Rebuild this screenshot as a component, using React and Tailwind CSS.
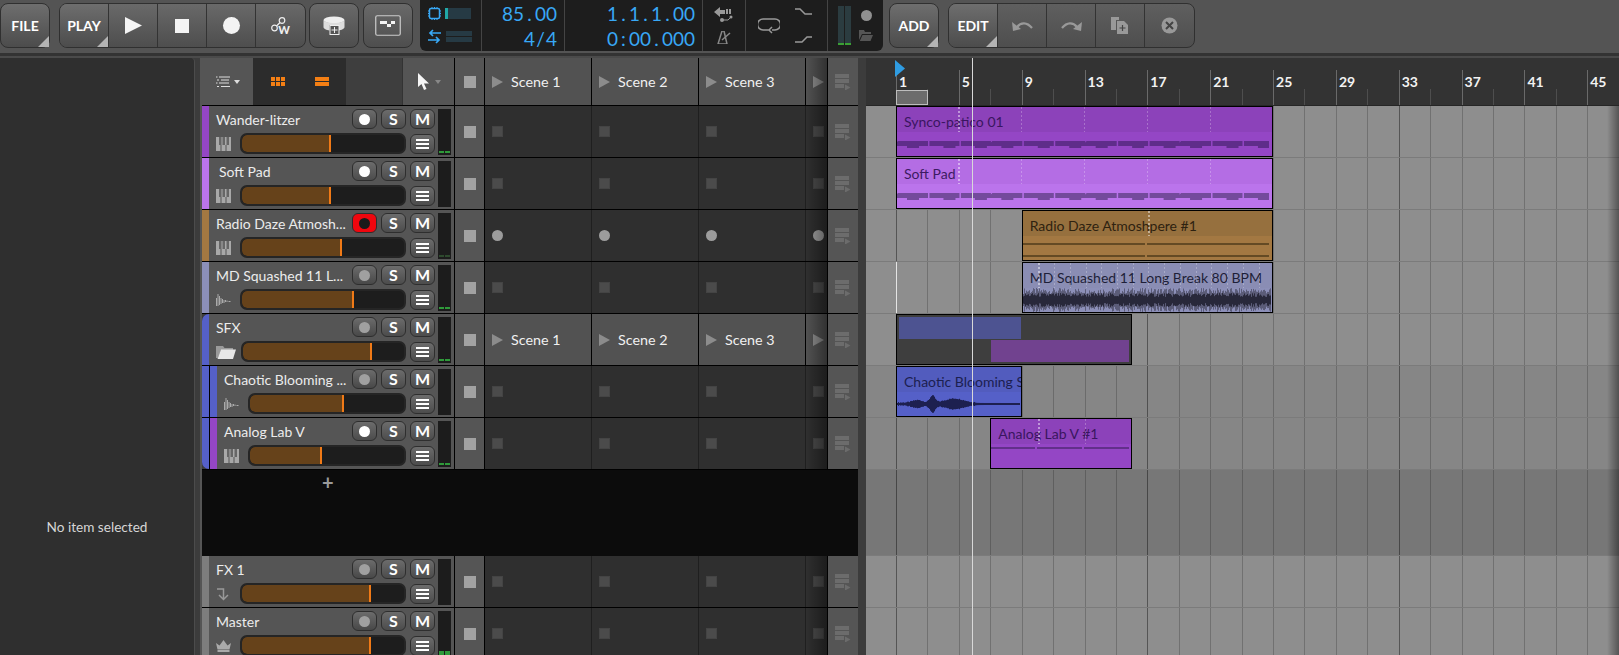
import React from "react"

const BAR = 15.71
const ORIGIN = 30 // bar 1 inside the arrange panel

const barX = (bar) => ORIGIN + (bar - 1) * BAR

const tracks = [
  { name: "Wander-litzer", color: "#9446c5", rec: "on", icon: "piano", fill: 90, meter: 1 },
  { name: "Soft Pad", color: "#bb74ec", rec: "on", icon: "piano", fill: 90, meter: 0, indent: true },
  { name: "Radio Daze Atmosh...", color: "#a37842", rec: "armed", icon: "piano", fill: 101, meter: 0.3, dots: true },
  { name: "MD Squashed 11 L...", color: "#8c8fb8", rec: "off", icon: "wave", fill: 113, meter: 1 },
  { name: "SFX", color: "#5560c8", rec: "off", icon: "folder", fill: 130, meter: 1, group: true },
  { name: "Chaotic Blooming ...", color: "#5560c8", rec: "off", icon: "wave", fill: 95, meter: 0, nested: true },
  { name: "Analog Lab V", color: "#9446c5", rec: "on", icon: "piano", fill: 73, meter: 1, nested: true, last: true },
]

const returns = [
  { name: "FX 1", color: "#7d7d7d", rec: "off", icon: "return", fill: 130, meter: 0 },
  { name: "Master", color: "#7d7d7d", rec: "off", icon: "crown", fill: 130, meter: 2 },
]

function Corner() {
  return <span className="absolute right-0 bottom-0 w-[11px] h-[11px] bg-[#b4b4b4] [clip-path:polygon(100%_0,100%_100%,0_100%)]" />
}

function ToolBtn({ label }) {
  return (
    <div className="relative w-[50px] h-[45px] flex items-center justify-center rounded-[8px] border border-[#303030] bg-linear-to-b from-[#6e6e6e] to-[#4c4c4c] text-[14px] font-bold text-white">
      {label}
      <Corner />
    </div>
  )
}

function GroupBtn({ first, last, children }) {
  return (
    <div className={`relative w-[49px] h-full flex items-center justify-center border-r border-[#333] ${first ? "bg-linear-to-b from-[#6e6e6e] to-[#4c4c4c] text-white font-bold text-[14px]" : ""} ${last ? "border-r-0" : ""}`}>
      {children}
    </div>
  )
}

function Toolbar() {
  return (
    <div className="h-[53px] shrink-0 flex items-start pt-[3px] bg-[#545454]">
      <ToolBtn label="FILE" />
      <div className="ml-[9px] h-[45px] flex rounded-[8px] border border-[#303030] overflow-hidden bg-linear-to-b from-[#696969] to-[#4e4e4e]">
        <GroupBtn first>PLAY<Corner /></GroupBtn>
        <GroupBtn><svg width="17" height="17" viewBox="0 0 17 17"><path d="M0 0L17 8.5L0 17Z" fill="#f4f4f4" /></svg></GroupBtn>
        <GroupBtn><span className="w-[14px] h-[14px] bg-[#f4f4f4]" /></GroupBtn>
        <GroupBtn><span className="w-[17px] h-[17px] rounded-full bg-[#f4f4f4]" /></GroupBtn>
        <GroupBtn last>
          <svg width="18" height="16" viewBox="0 0 18 16" className="mb-[2px] -mr-[4px]"><g fill="none" stroke="#eee" strokeWidth="1.2"><circle cx="3.5" cy="11" r="2.8" /><circle cx="11" cy="3.5" r="2.8" /><path d="M5.5 9L9 5.5" /></g></svg>
          <span className="text-[11px] font-black text-[#eee] mt-[10px] -ml-[7px]">W</span>
        </GroupBtn>
      </div>
      <div className="ml-[3px] w-[50px] h-[45px] flex items-center justify-center rounded-[8px] border border-[#303030] bg-linear-to-b from-[#696969] to-[#4e4e4e]">
        <svg width="22" height="19" viewBox="0 0 22 19"><ellipse cx="11" cy="4" rx="10.5" ry="3.5" fill="#eee" /><path d="M.5 4v7c0 2 3 3 6 3.5V9h9v5.5c3-.5 6-1.500 6-3.500V4c-1 2-5 3-10.500 3S1.500 6 .5 4Z" fill="#ddd" /><rect x="7" y="9.500" width="9" height="9" fill="#555" stroke="#eee" /><path d="M11.500 11v6M8.500 14h6" stroke="#eee" /></svg>
      </div>
      <div className="ml-[4px] w-[50px] h-[45px] flex items-center justify-center rounded-[8px] border border-[#303030] bg-linear-to-b from-[#696969] to-[#4e4e4e]">
        <svg width="26" height="21" viewBox="0 0 26 21"><rect x=".75" y=".75" width="24.500" height="19.500" rx="1.500" fill="none" stroke="#ccc" strokeWidth="1.200" /><rect x="5" y="6" width="7" height="3" fill="#f4f4f4" /><rect x="12" y="9" width="4" height="3" fill="#f4f4f4" /><rect x="16" y="6" width="4" height="3" fill="#f4f4f4" /></svg>
      </div>
      <Display />
      <div className="ml-[6px]"><ToolBtn label="ADD" /></div>
      <div className="ml-[9px] h-[45px] flex rounded-[8px] border border-[#303030] overflow-hidden bg-linear-to-b from-[#5f5f5f] to-[#4e4e4e]">
        <GroupBtn first>EDIT<Corner /></GroupBtn>
        <GroupBtn>
          <svg width="21" height="12" viewBox="0 0 21 12"><path d="M5 7C9 2 15 2 20 8" fill="none" stroke="#999" strokeWidth="2.200" /><path d="M0 2l1 9 8-2Z" fill="#999" /></svg>
        </GroupBtn>
        <GroupBtn>
          <svg width="21" height="12" viewBox="0 0 21 12"><path d="M16 7C12 2 6 2 1 8" fill="none" stroke="#999" strokeWidth="2.200" /><path d="M21 2l-1 9-8-2Z" fill="#999" /></svg>
        </GroupBtn>
        <GroupBtn>
          <svg width="18" height="17" viewBox="0 0 18 17"><path d="M0 0h8v3H5v10H0Z" fill="#999" /><path d="M6 4h7l4 4v9H6Z" fill="#999" /><path d="M11.500 8v6M8.500 11h6" stroke="#444" strokeWidth="1.200" /></svg>
        </GroupBtn>
        <GroupBtn last>
          <svg width="17" height="17" viewBox="0 0 17 17"><circle cx="8.500" cy="8.500" r="8" fill="#999" /><path d="M5 5l7 7M12 5l-7 7" stroke="#444" strokeWidth="2" /></svg>
        </GroupBtn>
      </div>
    </div>
  )
}

// the transport readout has fixed width digits
function Digits({ text }) {
  return (
    <div className="flex justify-end h-[25px]">
      {text.split("").map((c, i) => (
        <span key={i} className="w-[11px] text-center">{c}</span>
      ))}
    </div>
  )
}

function Display() {
  const blue = "text-[#38a8f5] text-[19px] leading-[25px]"
  return (
    <div className="ml-[7px] -mt-[3px] w-[463px] h-[51px] flex bg-[#1d1d1d] rounded-b-[6px] divide-x divide-[#444]">
      <div className="w-[62px] flex flex-col justify-between py-[7px] pl-[8px]">
        <div className="flex items-center gap-[4px]">
          <svg width="13" height="13" viewBox="0 0 13 13"><rect x="1.500" y="1.500" width="10" height="10" rx="1.500" fill="none" stroke="#38a8f5" strokeWidth="1.500" /><path d="M4 0v1.500M6.500 0v1.500M9 0v1.500M4 11.500V13M6.500 11.500V13M9 11.500V13M0 4h1.500M0 6.500h1.500M0 9h1.500M11.500 4H13M11.500 6.500H13M11.500 9H13" stroke="#38a8f5" /></svg>
          <div className="w-[26px] h-[11px] bg-[#263a44]"><div className="w-[3px] h-full bg-[#20a8a8]" /></div>
        </div>
        <div className="flex items-center gap-[5px]">
          <svg width="13" height="15" viewBox="0 0 13 15"><path d="M13 4H2M5 1L2 4l3 3M0 11h11M8 8l3 3-3 3" fill="none" stroke="#38a8f5" strokeWidth="1.700" /></svg>
          <div className="w-[26px] flex flex-col gap-[1px]"><div className="h-[5px] bg-[#263a44]" /><div className="h-[5px] bg-[#263a44]" /></div>
        </div>
      </div>
      <div className={`w-[83px] pr-[7px] pt-[1px] ${blue}`}><Digits text="85.00" /><Digits text="4/4" /></div>
      <div className={`w-[138px] pr-[7px] pt-[1px] ${blue}`}><Digits text="1.1.1.00" /><Digits text="0:00.000" /></div>
      <div className="w-[43px] flex flex-col items-center justify-center gap-[8px]">
        <svg width="20" height="16" viewBox="0 0 20 16"><path d="M0 5l6-5v3h5v4H6v3Z" fill="#999" /><path d="M13 2v5M16 2v5" stroke="#999" strokeWidth="2" /><path d="M8 13h6l4-4" fill="none" stroke="#999" /><circle cx="8" cy="13" r="2" fill="#999" /><circle cx="17" cy="10" r="1.500" fill="#999" /></svg>
        <svg width="14" height="13" viewBox="0 0 14 13"><path d="M5 0h2l3 13H1Z" fill="none" stroke="#888" strokeWidth="1.500" /><path d="M5 9l8-7" stroke="#888" strokeWidth="1.500" /></svg>
      </div>
      <div className="w-[82px] flex items-center pl-[12px] gap-[15px]">
        <svg width="22" height="16" viewBox="0 0 22 16"><path d="M14 12h3a4.500 4.500 0 0 0 0-11H5a4.500 4.500 0 0 0 0 11h6M14 9l-3 3 3 3" fill="none" stroke="#999" strokeWidth="1.500" /></svg>
        <div className="flex flex-col gap-[21px]">
          <svg width="17" height="7" viewBox="0 0 17 7"><path d="M0 1h5l5 5h7" fill="none" stroke="#999" strokeWidth="1.500" /></svg>
          <svg width="17" height="7" viewBox="0 0 17 7"><path d="M0 6h7l5-5h5" fill="none" stroke="#999" strokeWidth="1.500" /></svg>
        </div>
      </div>
      <div className="flex-1 flex items-center pl-[10px] gap-[8px]">
        <div className="flex gap-[1px] h-[39px]">
          <div className="w-[6px] bg-[#2b3c40] flex items-end"><div className="w-full h-[2px] bg-[#3aa034]" /></div>
          <div className="w-[6px] bg-[#2b3c40] flex items-end"><div className="w-full h-[2px] bg-[#3aa034]" /></div>
        </div>
        <div className="flex flex-col items-center gap-[9px]">
          <span className="w-[11px] h-[11px] rounded-full bg-[#909090]" />
          <svg width="14" height="11" viewBox="0 0 14 11"><path d="M0 0h5l1 2h6v2H3l-3 6Z M3.500 5H14l-2.500 6H.800Z" fill="#555" /></svg>
        </div>
      </div>
    </div>
  )
}

function SmallBtn({ children, className = "" }) {
  return (
    <div className={`w-[25px] h-[20px] flex items-center justify-center rounded-[6px] border border-[#2e2e2e] bg-linear-to-b from-[#6c6c6c] to-[#4c4c4c] text-[16px] font-bold text-white leading-none ${className}`}>
      {children}
    </div>
  )
}

function RecBtn({ state }) {
  if (state === "armed") {
    return (
      <div className="w-[25px] h-[20px] flex items-center justify-center rounded-[6px] border border-[#2e2e2e] bg-[#f0060e]">
        <span className="w-[11px] h-[11px] rounded-full bg-[#1a1a1a]" />
      </div>
    )
  }
  return (
    <SmallBtn className={state === "off" ? "from-[#5e5e5e] to-[#484848]" : ""}>
      <span className={`w-[11px] h-[11px] rounded-full ${state === "on" ? "bg-white" : "bg-[#a0a0a0]"}`} />
    </SmallBtn>
  )
}

function TrackIcon({ type }) {
  if (type === "piano") {
    return (
      <svg width="15" height="14" viewBox="0 0 15 14">
        <rect width="15" height="14" fill="#a8a8a8" />
        <path d="M5 14V8M10 14V8" stroke="#555" />
        <path d="M3 0h2.500v8H3zM6.500 0H9v8H6.500zM10.500 0H13v8h-2.500z" fill="#666" />
      </svg>
    )
  }
  if (type === "wave") {
    return (
      <svg width="15" height="14" viewBox="0 0 15 14">
        <path d="M.5 13V5M2 13V1M3.500 12V3M5 11V5M6.500 10V6M8 10V7M9.500 9V7M11 9V7.500M12.500 8.500h2" stroke="#aaa" />
      </svg>
    )
  }
  if (type === "folder") {
    return (
      <svg width="20" height="14" viewBox="0 0 20 14">
        <path d="M0 1h7l1.500 2H17v2H5L2 13H0Z" fill="#9a9a9a" />
        <path d="M5 4.500h15L17 14H1.500Z" fill="#e8e8e8" />
      </svg>
    )
  }
  if (type === "return") {
    return (
      <svg width="14" height="14" viewBox="0 0 14 14">
        <path d="M1 2h6.500v10M3 8l4.500 4.500L12 8" fill="none" stroke="#999" strokeWidth="1.500" />
      </svg>
    )
  }
  return (
    <svg width="15" height="12" viewBox="0 0 15 12">
      <path d="M0 3l3.500 2.500L7.500 0l4 5.500L15 3l-1.500 6.500h-12Z" fill="#aaa" />
      <rect x="1.500" y="10" width="12" height="2" fill="#aaa" />
    </svg>
  )
}

function Meter({ level }) {
  return (
    <div className="w-[13px] h-[46px] mt-[3px] ml-[3px] mr-[3px] bg-[#1c1c1c] flex items-end justify-center gap-[1px] pb-[2px] px-[1px] shrink-0">
      <div className={`w-[5px] ${level === 2 ? "h-[4px]" : "h-[2px]"} ${level === 0 ? "" : level < 1 ? "bg-[#2e4a2e]" : "bg-[#2f9a3a]"}`} />
      <div className={`w-[5px] ${level === 2 ? "h-[4px]" : "h-[2px]"} ${level === 0 ? "" : level < 1 ? "bg-[#2e4a2e]" : "bg-[#2f9a3a]"}`} />
    </div>
  )
}

function TrackHeader({ track }) {
  return (
    <div className="flex-1 min-w-0 flex bg-[#555] border-r border-black pl-[7px]">
      <div className="flex-1 min-w-0">
        <div className="flex items-center mt-[3px] h-[20px]">
          <div className={`flex-1 min-w-0 text-[14px] text-[#ececec] whitespace-nowrap ${track.indent ? "pl-[3px]" : ""}`}>{track.name}</div>
          <div className="flex gap-[4px] shrink-0">
            <RecBtn state={track.rec} />
            <SmallBtn>S</SmallBtn>
            <SmallBtn>M</SmallBtn>
          </div>
        </div>
        <div className="flex items-center mt-[4px]">
          <div className={`w-[24px] shrink-0 flex ${track.group ? "w-[25px]" : ""}`}><TrackIcon type={track.icon} /></div>
          <div className="flex-1 h-[21px] rounded-[7px] bg-[#1d1d1d] border-[2px] border-[#252525] flex overflow-hidden">
            <div className="h-full bg-[#66421a] border-r-[2px] border-[#f07a17] rounded-l-[5px]" style={{ width: track.fill - 1 }} />
          </div>
          <SmallBtn className="ml-[4px] shrink-0">
            <span className="w-[13px] flex flex-col gap-[2px]">
              <i className="h-[2px] bg-white" /><i className="h-[2px] bg-white" /><i className="h-[2px] bg-white" />
            </span>
          </SmallBtn>
        </div>
      </div>
      <Meter level={track.meter} />
    </div>
  )
}

function SceneMark({ dots }) {
  return dots
    ? <span className="ml-[7px] w-[11px] h-[11px] rounded-full bg-[#9c9c9c]" />
    : <span className="ml-[7px] w-[11px] h-[11px] bg-[#4b4b4b] border border-[#444]" />
}

function SceneListIcon() {
  return (
    <svg width="16" height="16" viewBox="0 0 16 16">
      <path d="M0 0h14v4H0zM0 5h14v4H0zM0 10h9v4H0z" fill="#6c6c6c" />
      <path d="M10 10.500l5.500 3-5.500 3Z" fill="#6c6c6c" />
    </svg>
  )
}

function SceneTriangle() {
  return <svg width="11" height="12" viewBox="0 0 11 12" className="shrink-0"><path d="M0 0L11 6L0 12Z" fill="#8c8c8c" /></svg>
}

function SceneCells({ track, head }) {
  const names = ["Scene 1", "Scene 2", "Scene 3"]
  const base = head ? "bg-[#525252]" : "bg-[#2f2f2f]"
  return (
    <>
      <div className="w-[30px] shrink-0 flex items-center justify-center bg-[#555] border-r border-black">
        <span className="w-[12px] h-[12px] bg-[#a2a2a2]" />
      </div>
      {names.map((n) => (
        <div key={n} className={`w-[107px] shrink-0 flex items-center border-r ${head ? "border-black pl-[7px]" : "border-[#1f1f1f]"} ${base}`}>
          {head
            ? <><SceneTriangle /><span className="ml-[8px] text-[14.300px] text-[#f0f0f0]">{n}</span></>
            : <SceneMark dots={track && track.dots} />}
        </div>
      ))}
      <div className={`w-[22px] shrink-0 flex items-center relative ${base} ${head ? "pl-[7px]" : ""} border-r border-black`}>
        {head ? <SceneTriangle /> : <SceneMark dots={track && track.dots} />}
        <span className="absolute inset-0 bg-linear-to-r from-transparent to-black/40" />
      </div>
      <div className="w-[30px] shrink-0 flex items-center justify-center bg-[#555]">
        <SceneListIcon />
      </div>
    </>
  )
}

function TrackRow({ track }) {
  return (
    <div className="h-[52px] shrink-0 flex border-b border-black">
      {track.nested ? (
        <>
          <div className={`w-[7px] shrink-0 bg-[#5560c8] ${track.last ? "rounded-bl-[8px]" : ""}`} />
          <div className="w-[1px] shrink-0 bg-black" />
          <div className="w-[7px] shrink-0" style={{ background: track.color }} />
        </>
      ) : (
        <div className={`w-[7px] shrink-0 ${track.group ? "rounded-tl-[8px]" : ""}`} style={{ background: track.color }} />
      )}
      <TrackHeader track={track} />
      <SceneCells track={track} head={track.group} />
    </div>
  )
}

function TrackList() {
  return (
    <div className="w-[658px] shrink-0 ml-[5px] border-l-[2px] border-[#555] flex flex-col">
      <div className="h-[48px] flex border-b border-black shrink-0">
        <div className="w-[51px] flex items-center justify-center gap-[2px] bg-[#555]">
          <svg width="16" height="12" viewBox="0 0 16 12"><path d="M3 1h11M5 4h8M3 7h10M5 10.500h9M0 1h1.500M1 4h2M0 7h1.500M1 10.500h2" stroke="#ddd" /></svg>
          <svg width="6" height="4" viewBox="0 0 6 4"><path d="M0 0h6L3 4Z" fill="#ddd" /></svg>
        </div>
        <div className="w-[93px] flex items-center justify-around pl-[3px] pr-[2px] bg-[#2c2c2c]">
          <svg width="14" height="9" viewBox="0 0 14 9"><path d="M0 0h4v4H0zM5 0h4v4H5zM10 0h4v4h-4zM0 5h4v4H0zM5 5h4v4H5zM10 5h4v4h-4z" fill="#f47f14" /></svg>
          <svg width="14" height="9" viewBox="0 0 14 9"><path d="M0 0h14v4H0zM0 5h14v4H0z" fill="#f47f14" /></svg>
        </div>
        <div className="w-[56px] bg-[#3e3e3e]" />
        <div className="w-[53px] flex items-center justify-center gap-[5px] bg-[#555] border-l border-[#333] border-r border-r-black">
          <svg width="13" height="17" viewBox="0 0 13 17"><path d="M1 0v14l3.500-3 2.500 6 2.500-1-2.500-5.500h5Z" fill="#f6f6f6" /></svg>
          <svg width="6" height="4" viewBox="0 0 6 4"><path d="M0 0h6L3 4Z" fill="#888" /></svg>
        </div>
        <SceneCells head />
      </div>
      {tracks.map((t) => <TrackRow key={t.name} track={t} />)}
      <div className="h-[86px] shrink-0 bg-[#0c0c0c] pl-[118px] text-[#9a9a9a] text-[20px] leading-[24px] font-bold">
        <div className="w-[14px] pl-[2px]">+</div>
      </div>
      {returns.map((t) => <TrackRow key={t.name} track={t} />)}
    </div>
  )
}

function GridLines() {
  const lines = []
  for (let i = 0; i < 24; i++) lines.push(i)
  return (
    <>
      {lines.map((i) => (
        <span
          key={i}
          className={`absolute top-0 bottom-0 w-[1px] ${i % 8 === 0 ? "bg-black/40" : "bg-black/20"}`}
          style={{ left: barX(1 + i * 2) }}
        />
      ))}
    </>
  )
}

// seeded so the waveform stays the same on each render
function noise(i) {
  const v = Math.sin(i * 12.9898) * 43758.5453
  return v - Math.floor(v)
}

function loopWave(width, height, fn) {
  let d = ""
  for (let x = 0; x < width; x++) {
    const a = fn(x)
    d += `M${x + 0.5} ${height / 2 - a}V${height / 2 + a}`
  }
  return d
}

function BreakWave() {
  const outer = loopWave(248, 24, (x) => 6 + noise(x) * 6)
  const inner = loopWave(248, 24, (x) => 3 + noise(x + 300) * 4)
  return (
    <svg width="248" height="24" className="absolute left-0 bottom-0">
      <path d={outer} stroke="#5b5c78" />
      <path d={inner} stroke="#28283a" />
    </svg>
  )
}

function BloomWave() {
  const env = (x) => {
    const lobe = (c, w, h) => h * Math.exp(-((x - c) * (x - c)) / (2 * w * w))
    return 1 + lobe(20, 5, 2.500) + lobe(35, 2.500, 7) + lobe(57, 9, 4) + noise(x) * (x < 80 ? 1 : 0)
  }
  return (
    <svg width="123" height="24" className="absolute left-0 top-[25px]">
      <path d={loopWave(123, 24, env)} stroke="#1d2050" />
    </svg>
  )
}

function NoteStrip({ width, tone }) {
  const cells = []
  for (let x = 0; x < width; x += 31.45) cells.push(x)
  return (
    <svg width={width} height="12" className="absolute left-0 top-[34px]">
      {cells.map((x, i) => (
        <path key={i} d={`M${x + 1} 0h30v5h-${i % 3 === 0 ? 9 : 4}v2h-12v-2h-14Z`} fill={tone} />
      ))}
    </svg>
  )
}

function HoldStrip({ tone, splits, rows }) {
  return (
    <>
      {rows.map((top) => (
        <div key={top} className="absolute left-0 right-0 flex h-[2px] gap-[2px]" style={{ top }}>
          {splits.map((w, i) => <div key={i} style={{ width: w, background: tone }} />)}
        </div>
      ))}
    </>
  )
}

function Clip({ from, to, color, band, text, title, children, marks = [] }) {
  return (
    <div
      className="absolute top-0 h-[51px] border border-black overflow-hidden"
      style={{ left: from, width: to - from, background: color }}
    >
      <div className="h-[25px] pl-[7px] text-[14px] leading-[29px] whitespace-nowrap overflow-hidden" style={{ background: band, color: text }}>
        {title}
      </div>
      {marks.map((m, i) => (
        <span
          key={i}
          className={`absolute top-0 h-[25px] ${i === 0 ? "w-[2px] bg-[repeating-linear-gradient(to_bottom,rgba(255,255,255,.45)_0_2px,transparent_2px_4px)]" : "w-[1px] bg-[repeating-linear-gradient(to_bottom,rgba(255,255,255,.25)_0_2px,transparent_2px_4px)]"}`}
          style={{ left: m }}
        />
      ))}
      {children}
    </div>
  )
}

function Lane({ bg = "bg-[#8e8e8e]", h = "h-[52px]", children }) {
  return (
    <div className={`relative ${h} shrink-0 border-b border-[#7b7b7b] ${bg}`}>
      <GridLines />
      {children}
    </div>
  )
}

function Timeline() {
  const labels = []
  for (let b = 1; b <= 45; b += 4) labels.push(b)
  return (
    <div className="relative h-[48px] shrink-0 bg-[#333] border-b border-[#262626]">
      {labels.map((b) => (
        <div key={b} className="absolute top-[12px] bottom-0 w-[1px] bg-[#6a6a6a]" style={{ left: barX(b) }}>
          <span className="absolute left-[3px] top-[2px] text-[14px] font-bold leading-[20px] text-[#f2f2f2]">{b}</span>
        </div>
      ))}
      {labels.map((b) => (
        <span key={b} className="absolute top-[31px] bottom-0 w-[1px] bg-[#4e4e4e]" style={{ left: barX(b + 2) }} />
      ))}
      <div className="absolute top-[32px] h-[15px] w-[32px] bg-[#6c6c6c] border border-[#bdbdbd]" style={{ left: ORIGIN }} />
      <svg width="10" height="17" viewBox="0 0 10 17" className="absolute top-[2px]" style={{ left: ORIGIN - 1 }}>
        <path d="M0 0L10 8.500L0 17Z" fill="#2f9ce2" />
      </svg>
    </div>
  )
}

function Arrange() {
  return (
    <div className="relative flex-1 ml-[8px] flex flex-col overflow-hidden">
      <Timeline />
      <Lane>
        <Clip from={barX(1)} to={barX(25)} color="#9446c5" band="#8c42ba" text="#3a1660" title="Synco-patico 01" marks={[61, 124, 187, 250, 313]}>
          <NoteStrip width={372} tone="#5f2d8a" />
        </Clip>
      </Lane>
      <Lane>
        <Clip from={barX(1)} to={barX(25)} color="#bb74ec" band="#b46de4" text="#3c1b62" title="Soft Pad" marks={[61, 124, 187, 250, 313]}>
          <NoteStrip width={372} tone="#744a9c" />
        </Clip>
      </Lane>
      <Lane>
        <Clip from={barX(9)} to={barX(25)} color="#a37842" band="#96703e" text="#2e2210" title="Radio Daze Atmoshpere #1" marks={[125]}>
          <HoldStrip tone="#644a24" splits={[122, 122]} rows={[32, 44]} />
        </Clip>
      </Lane>
      <Lane>
        <span className="absolute top-0 bottom-0 w-[1px] bg-[#e4e4e4]" style={{ left: ORIGIN }} />
        <Clip from={barX(9)} to={barX(25)} color="#8c8fb8" band="#8a8db4" text="#1e1f38" title="MD Squashed 11 Long Break 80 BPM" marks={[15, 31, 47, 63, 78, 94, 110, 125, 141, 157, 173, 188, 204, 220, 236]}>
          <BreakWave />
        </Clip>
      </Lane>
      <Lane>
        <div className="absolute top-0 h-[51px] border border-black bg-[#3e3e3e] p-[2px] flex flex-col gap-[1px]" style={{ left: barX(1), width: 236 }}>
          <div className="h-[22px] w-[122px] bg-[#4d5391]" />
          <div className="h-[22px] w-[138px] ml-[92px] bg-[#71428f]" />
        </div>
      </Lane>
      <Lane bg="bg-[#868686]">
        <Clip from={barX(1)} to={barX(9)} color="#5560c8" band="#525cbe" text="#1c2050" title="Chaotic Blooming Sound">
          <BloomWave />
        </Clip>
      </Lane>
      <Lane bg="bg-[#868686]">
        <Clip from={barX(7)} to={barX(16)} color="#9446c5" band="#8c42ba" text="#3a1660" title="Analog Lab V #1" marks={[47, 94]}>
          <HoldStrip tone="#62308a" splits={[44, 45, 45]} rows={[28]} />
        </Clip>
      </Lane>
      <Lane bg="bg-[#777]" h="h-[86px]" />
      <Lane />
      <Lane />
      <span className="absolute top-[0px] bottom-0 w-[1px] bg-[#d8d8d8]" style={{ left: 106 }} />
      <span className="absolute top-[48px] bottom-0 right-0 w-[12px] bg-linear-to-r from-transparent to-black/40" />
    </div>
  )
}

export default function App() {
  return (
    <div className="w-[1619px] h-[655px] overflow-hidden flex flex-col bg-[#3c3c3c] font-['Lato',sans-serif]">
      <Toolbar />
      <div className="h-[5px] shrink-0 bg-linear-to-b from-[#333] from-60% to-[#4a4a4a] to-60%" />
      <div className="flex-1 min-h-0 flex">
        <div className="w-[195px] shrink-0 flex items-end justify-center bg-[#2f2f2f] border-r border-[#4c4c4c] rounded-tr-[4px] text-[13.600px] text-[#d6d6d6] pb-[118px]">
          No item selected
        </div>
        <TrackList />
        <Arrange />
      </div>
    </div>
  )
}
